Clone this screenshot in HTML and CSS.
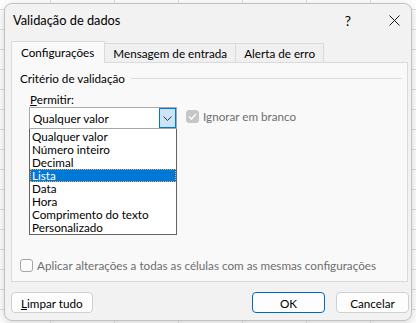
FILE: index.html
```html
<!DOCTYPE html>
<html lang="pt">
<head>
  <meta charset="UTF-8">
  <title>Validação de dados</title>
  <link rel="stylesheet" href="styles.css">
</head>
<body>
  <div class="dialog">
    <div class="titlebar">
      <span class="title">Validação de dados</span>
      <span class="help">?</span>
      <span class="close">
        <svg viewBox="0 0 11 11" width="11" height="11">
          <path d="M0.5,0.5 L10.5,10.5 M10.5,0.5 L0.5,10.5" />
        </svg>
      </span>
    </div>

    <div class="tabs">
      <div class="tab active">Configurações</div>
      <div class="tab">Mensagem de entrada</div>
      <div class="tab">Alerta de erro</div>
    </div>

    <div class="panel">
      <div class="group-title">
        <span>Critério de validação</span>
        <div class="rule"></div>
      </div>

      <div class="field">
        <div class="field-label"><u>P</u>ermitir:</div>
        <div class="field-row">
          <div class="combo">
            <div class="combo-box">
              <span class="combo-value">Qualquer valor</span>
              <span class="combo-btn">
                <svg viewBox="0 0 9 5" width="9" height="5">
                  <path d="M0.5,0.5 L4.5,4.5 L8.5,0.5" />
                </svg>
              </span>
            </div>
            <ul class="listbox">
              <li>Qualquer valor</li>
              <li>Número inteiro</li>
              <li>Decimal</li>
              <li class="selected">Lista</li>
              <li>Data</li>
              <li>Hora</li>
              <li>Comprimento do texto</li>
              <li>Personalizado</li>
            </ul>
          </div>
          <label class="check disabled">
            <span class="box checked">
              <svg viewBox="0 0 10 8" width="9" height="7">
                <path d="M1,4 L3.8,6.8 L9,1.2" />
              </svg>
            </span>
            Ignorar em branco
          </label>
        </div>
      </div>

      <label class="check apply">
        <span class="box"></span>
        Aplicar alterações a todas as células com as mesmas configurações
      </label>
    </div>

    <div class="footer">
      <button class="btn"><u>L</u>impar tudo</button>
      <span class="grow"></span>
      <button class="btn primary">OK</button>
      <button class="btn">Cancelar</button>
    </div>
  </div>
</body>
</html>
```

FILE: styles.css
```css
body {
  margin: 0;
  width: 416px;
  height: 323px;
  overflow: hidden;
  font-family: 'Lato', 'Noto Sans', sans-serif;
  font-size: 11.7px;
  color: #000;
  background-color: #fff;
  background-image:
    linear-gradient(90deg, #e1e1e1 1px, transparent 1px),
    linear-gradient(180deg, #e1e1e1 1px, transparent 1px);
  background-size: 64px 20px;
  background-position: 50px 9px;
}
.dialog {
  box-sizing: border-box;
  margin: 3px 0 0 4px;
  width: 408px;
  height: 318px;
  background: #f2f2f2;
  border: 1px solid #c2c2c2;
  border-radius: 8px;
  box-shadow: 0 2px 10px rgba(0, 0, 0, 0.18);
  display: flex;
  flex-direction: column;
}
.titlebar {
  height: 37px;
  display: flex;
  align-items: flex-start;
  padding: 8px 7px 0 8px;
  box-sizing: border-box;
}
.title {
  font-size: 12.8px;
  line-height: 17px;
}
.help {
  margin-left: auto;
  width: 20px;
  text-align: center;
  font-size: 14px;
  line-height: 17px;
}
.close {
  width: 20px;
  margin-left: 26px;
  height: 17px;
  display: flex;
  align-items: center;
  justify-content: center;
}
.close svg {
  stroke: #1b1b1b;
  stroke-width: 1;
  fill: none;
}
.tabs {
  height: 21px;
  display: flex;
  align-items: flex-end;
  margin-left: 6px;
  position: relative;
  z-index: 1;
}
.tab {
  height: 19px;
  line-height: 18px;
  padding: 0 8px;
  border: 1px solid #dadada;
  border-bottom: none;
  box-sizing: border-box;
  background: #f0f0f0;
  margin-left: -1px;
}
.tab:first-child {
  margin-left: 0;
}
.tab.active {
  height: 22px;
  margin-bottom: -1px;
  line-height: 20px;
  background: #f9f9f9;
  padding: 0 10px 0 9px;
}
.panel {
  box-sizing: border-box;
  height: 220px;
  margin: 0 3px 0 6px;
  background: #f9f9f9;
  border: 1px solid #dadada;
  padding: 7px 5px 9px 8px;
  display: flex;
  flex-direction: column;
}
.group-title {
  display: flex;
  align-items: center;
  line-height: 16px;
  gap: 6px;
}
.rule {
  flex: 1;
  height: 1px;
  background: #dcdcdc;
  margin-top: 1px;
}
.field {
  margin-top: 5px;
  padding-left: 9px;
}
.field-label {
  line-height: 16px;
  padding-left: 1px;
}
.field-row {
  display: flex;
  align-items: flex-start;
  gap: 9px;
}
.combo {
  position: relative;
  width: 148px;
}
.combo-box {
  box-sizing: border-box;
  height: 22px;
  background: #fff;
  border: 1px solid #a8a8a8;
  display: flex;
  align-items: center;
  padding-left: 3px;
}
.combo-value {
  flex: 1;
}
.combo-btn {
  box-sizing: border-box;
  width: 17px;
  height: 20px;
  background: #cce4f7;
  border: 1px solid #0078d4;
  display: flex;
  align-items: center;
  justify-content: center;
}
.combo-btn svg {
  stroke: #333;
  stroke-width: 1;
  fill: none;
}
.listbox {
  position: absolute;
  top: 22px;
  left: 0;
  box-sizing: border-box;
  width: 148px;
  margin: 0;
  padding: 0;
  list-style: none;
  background: #fff;
  border: 1px solid #646464;
  border-top: none;
  padding-top: 1px;
}
.listbox li {
  height: 13px;
  line-height: 13px;
  padding-left: 2px;
  white-space: nowrap;
  overflow: hidden;
}
.listbox li.selected {
  background: #0078d7;
  color: #fff;
  outline: 1px dotted #f3a54a;
  outline-offset: -1px;
}
.check {
  display: flex;
  align-items: center;
  gap: 4px;
  color: #6e6e6e;
}
.field-row .check {
  margin-top: 2px;
}
.box {
  box-sizing: border-box;
  width: 13px;
  height: 13px;
  border: 1px solid #a6a6a6;
  border-radius: 3px;
  background: #fcfcfc;
  display: flex;
  align-items: center;
  justify-content: center;
}
.box.checked {
  background: #c6c6c6;
  border-color: #c6c6c6;
}
.box svg {
  stroke: #fff;
  stroke-width: 1.5;
  fill: none;
}
.check.apply {
  margin-top: auto;
}
.footer {
  display: flex;
  gap: 11px;
  padding: 10px 2px 0 6px;
}
.grow {
  flex: 1;
}
.btn {
  font-family: inherit;
  font-size: 11.7px;
  color: #000;
  height: 21px;
  min-width: 73px;
  padding: 0 9px;
  background: #fdfdfd;
  border: 1px solid #d0d0d0;
  border-radius: 4px;
}
.btn.primary {
  border-color: #0067c0;
}
```
